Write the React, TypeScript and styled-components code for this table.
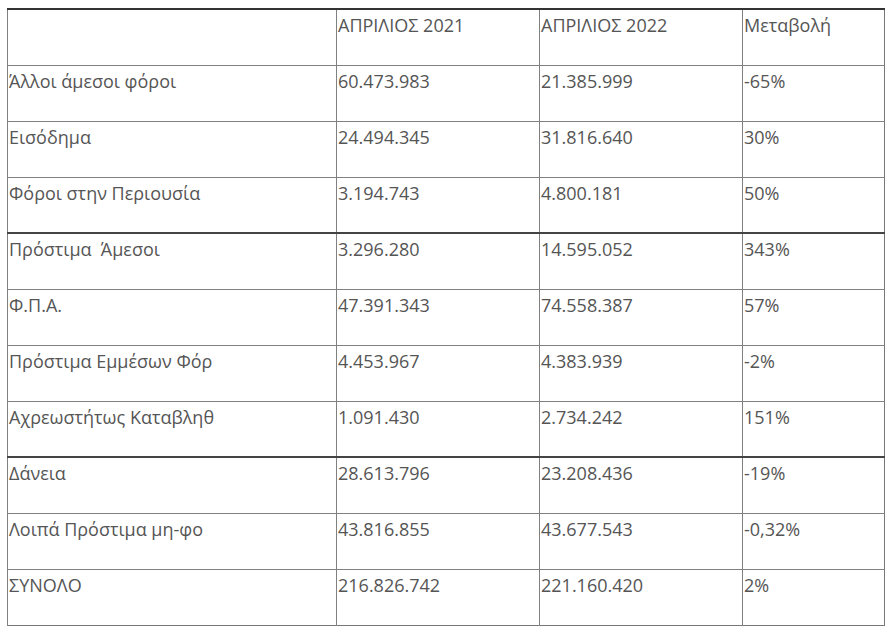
import React from "react";
import styled, { createGlobalStyle } from "styled-components";

const Global = createGlobalStyle`
  html, body { margin: 0; padding: 0; background: #fff; }
  body { padding: 8px 0 0 7px; font-family: "Open Sans", "Noto Sans", sans-serif; }
`;

const Table = styled.table`
  border-collapse: collapse;
  width: 877px;
  table-layout: fixed;
  color: #555;
  font-size: 18px;
  line-height: 25px;
  border-top: 2px solid #333;
  border-left: 1px solid #777;
  border-right: 1px solid #777;
  border-bottom: 1px solid #777;
`;

const Row = styled.tr<{ $h: number; $thick?: boolean }>`
  height: ${(p) => p.$h}px;
  border-top: ${(p) => (p.$thick ? "2px solid #444" : "1px solid #808080")};
`;

const Cell = styled.td`
  vertical-align: top;
  padding: 3px 1px 0 1px;
  border-left: 1px solid #808080;
  white-space: pre;
  overflow: hidden;
`;

const rows: [string, string, string, string, boolean?][] = [
  ["Άλλοι άμεσοι φόροι", "60.473.983", "21.385.999", "-65%"],
  ["Εισόδημα", "24.494.345", "31.816.640", "30%"],
  ["Φόροι στην Περιουσία", "3.194.743", "4.800.181", "50%"],
  ["Πρόστιμα  Άμεσοι", "3.296.280", "14.595.052", "343%", true],
  ["Φ.Π.Α.", "47.391.343", "74.558.387", "57%"],
  ["Πρόστιμα Εμμέσων Φόρ", "4.453.967", "4.383.939", "-2%"],
  ["Αχρεωστήτως Καταβληθ", "1.091.430", "2.734.242", "151%"],
  ["Δάνεια", "28.613.796", "23.208.436", "-19%", true],
  ["Λοιπά Πρόστιμα μη-φο", "43.816.855", "43.677.543", "-0,32%"],
  ["ΣΥΝΟΛΟ", "216.826.742", "221.160.420", "2%"],
];

export default function App() {
  return (
    <>
      <Global />
      <Table>
        <colgroup>
          <col style={{ width: 329 }} />
          <col style={{ width: 203 }} />
          <col style={{ width: 203 }} />
          <col style={{ width: 142 }} />
        </colgroup>
        <tbody>
          <Row $h={56}>
            <Cell></Cell>
            <Cell>ΑΠΡΙΛΙΟΣ 2021</Cell>
            <Cell>ΑΠΡΙΛΙΟΣ 2022</Cell>
            <Cell>Μεταβολή</Cell>
          </Row>
          {rows.map(([a, b, c, d, thick], i) => (
            <Row key={i} $h={56} $thick={thick}>
              <Cell>{a}</Cell>
              <Cell>{b}</Cell>
              <Cell>{c}</Cell>
              <Cell>{d}</Cell>
            </Row>
          ))}
        </tbody>
      </Table>
    </>
  );
}
